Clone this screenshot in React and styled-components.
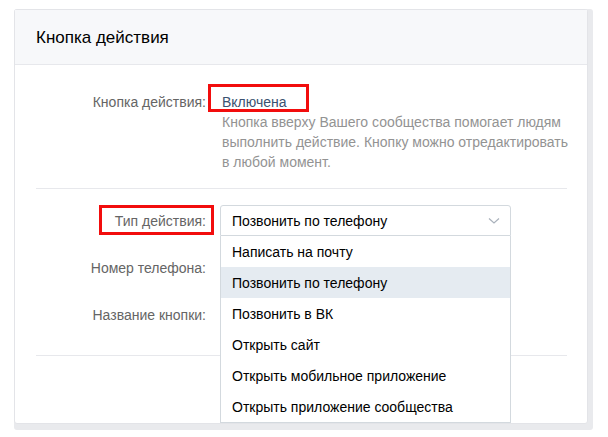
import React from "react";
import styled, { createGlobalStyle } from "styled-components";

const GlobalStyle = createGlobalStyle`
  html, body { margin: 0; padding: 0; background: #ffffff; }
  body { font-family: "Liberation Sans", Arial, sans-serif; -webkit-font-smoothing: antialiased; }
`;

const Page = styled.div`
  padding: 9px 0 0 14px;
`;

const Frame = styled.div`
  width: 579px;
  height: 421px;
  box-sizing: border-box;
  background: #e9eaed;
  padding: 0 5px 6px 0;
  border-radius: 3px;
`;

const Card = styled.div`
  height: 100%;
  box-sizing: border-box;
  background: #ffffff;
  border: 1px solid #e3e4e8;
  border-radius: 3px;
  display: flex;
  flex-direction: column;
`;

const Header = styled.div`
  height: 55px;
  box-sizing: border-box;
  flex: none;
  background: #f7f8fa;
  border-bottom: 1px solid #e7e8ec;
  display: flex;
  align-items: center;
  padding: 1px 0 0 21px;
  font-size: 17px;
  color: #000;
`;

const Body = styled.div`
  padding: 0 20px 0 21px;
`;

const Section = styled.div`
  display: grid;
  grid-template-columns: 170px ${(p) => p.$col};
  column-gap: 14px;
  row-gap: ${(p) => p.$gap || 0}px;
  padding: ${(p) => p.$pt}px 0 ${(p) => p.$pb}px;
  border-bottom: 1px solid #e7e8ec;
  align-items: center;
`;

const Label = styled.div`
  text-align: right;
  font-size: 14px;
  line-height: 20px;
  color: #656565;
  white-space: nowrap;
  align-self: ${(p) => (p.$top ? "start" : "center")};
`;

const Marked = styled.span`
  position: relative;
  &::after {
    content: "";
    position: absolute;
    left: ${(p) => p.$l}px;
    right: ${(p) => p.$r}px;
    top: ${(p) => p.$t}px;
    bottom: ${(p) => p.$b}px;
    border: 3px solid #f20d0d;
    pointer-events: none;
  }
`;

const ValueCol = styled.div`
  padding-left: 2px;
`;

const Value = styled.div`
  font-size: 14px;
  line-height: 20px;
  color: #3b5271;
`;

const Hint = styled.div`
  font-size: 14px;
  line-height: 20px;
  color: #939393;
  white-space: nowrap;
`;

const SelectWrap = styled.div`
  position: relative;
  height: 31px;
`;

const SelectBox = styled.div`
  height: 31px;
  box-sizing: border-box;
  border: 1px solid #d3d9de;
  border-radius: 3px 3px 0 0;
  background: #fff;
  display: flex;
  align-items: center;
  justify-content: space-between;
  padding: 0 10px 0 11px;
  font-size: 14px;
  color: #000;
`;

const Menu = styled.div`
  position: absolute;
  top: 31px;
  left: 0;
  right: 0;
  background: #fff;
  border: 1px solid #d3d9de;
  border-top: none;
  z-index: 2;
`;

const Item = styled.div`
  height: 31px;
  display: flex;
  align-items: center;
  padding-left: 11px;
  font-size: 14px;
  color: #000;
  background: ${(p) => (p.$active ? "#e5ebf1" : "#fff")};
`;

const Spacer = styled.div`
  height: 31px;
`;

const items = [
  "Написать на почту",
  "Позвонить по телефону",
  "Позвонить в ВК",
  "Открыть сайт",
  "Открыть мобильное приложение",
  "Открыть приложение сообщества",
];

const Chevron = () => (
  <svg width="12" height="8" viewBox="0 0 12 8" fill="none">
    <path d="M1 1.5 L6 6 L11 1.5" stroke="#a9b1bb" strokeWidth="1.2" />
  </svg>
);

export default function App() {
  return (
    <>
      <GlobalStyle />
      <Page>
        <Frame>
          <Card>
            <Header>Кнопка действия</Header>
            <Body>
              <Section $col="345px" $pt={27} $pb={16}>
                <Label $top>Кнопка действия:</Label>
                <ValueCol>
                  <Value>
                    <Marked $l={-14} $r={-22} $t={-10} $b={-2}>
                      Включена
                    </Marked>
                  </Value>
                  <Hint>
                    Кнопка вверху Вашего сообщества помогает людям
                    <br />
                    выполнить действие. Кнопку можно отредактировать
                    <br />
                    в любой момент.
                  </Hint>
                </ValueCol>
              </Section>
              <Section $col="291px" $pt={16} $pb={25} $gap={16}>
                <Label>
                  <Marked $l={-16} $r={-8} $t={-8} $b={-6}>
                    Тип действия:
                  </Marked>
                </Label>
                <SelectWrap>
                  <SelectBox>
                    <span>Позвонить по телефону</span>
                    <Chevron />
                  </SelectBox>
                  <Menu>
                    {items.map((t, i) => (
                      <Item key={t} $active={i === 1}>
                        {t}
                      </Item>
                    ))}
                  </Menu>
                </SelectWrap>
                <Label>Номер телефона:</Label>
                <Spacer />
                <Label>Название кнопки:</Label>
                <Spacer />
              </Section>
            </Body>
          </Card>
        </Frame>
      </Page>
    </>
  );
}
